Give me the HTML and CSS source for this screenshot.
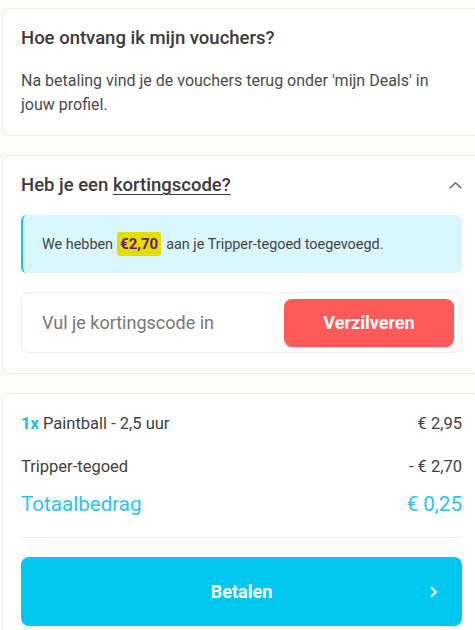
FILE: index.html
```html
<!DOCTYPE html>
<html>
<head>
    <link rel="stylesheet" href="styles.css">
</head>
<body>

    <div class="card">
        <h2 class="card-title">Hoe ontvang ik mijn vouchers?</h2>
        <p class="card-text">Na betaling vind je de vouchers terug onder 'mijn Deals' in jouw profiel.</p>
    </div>

    <div class="card card-code">
        <div class="card-head">
            <h2 class="card-title">Heb je een <span class="underline">kortingscode?</span></h2>
            <svg class="chevron" width="13" height="7" viewBox="0 0 13 7">
                <path d="M0.8 6.3 L6.5 0.9 L12.2 6.3" fill="none" stroke="#555" stroke-width="1.2"/>
            </svg>
        </div>

        <div class="notice">
            We hebben <span class="amount">€2,70</span> aan je Tripper-tegoed toegevoegd.
        </div>

        <form class="code-form">
            <input type="text" class="code-input" placeholder="Vul je kortingscode in">
            <button type="button" class="code-button">Verzilveren</button>
        </form>
    </div>

    <div class="card">
        <div class="line">
            <span><span class="qty">1x</span> Paintball - 2,5 uur</span>
            <span>€ 2,95</span>
        </div>
        <div class="line">
            <span>Tripper-tegoed</span>
            <span>- € 2,70</span>
        </div>
        <div class="line total">
            <span>Totaalbedrag</span>
            <span>€ 0,25</span>
        </div>

        <hr class="divider">

        <button type="button" class="pay-button">
            Betalen
            <svg class="pay-arrow" width="9" height="14" viewBox="0 0 9 14">
                <path d="M2 2 L7 7 L2 12" fill="none" stroke="#fff" stroke-width="2"/>
            </svg>
        </button>
    </div>

</body>
</html>
```

FILE: styles.css
```css
html,
body {
    height: 100%;
}

body {
    font-family: Roboto, "Liberation Sans", sans-serif;
    background-color: #fbfbf8;
    margin: 0;
    padding: 8px 0 0 2px;
    box-sizing: border-box;
    overflow: hidden;
    color: #333;
}

.card {
    background-color: #fff;
    border: 1px solid #ededea;
    border-radius: 8px;
    width: 441px;
    padding: 17px 18px 18px 18px;
    margin-bottom: 19px;
}

.card-code {
    padding-bottom: 20px;
}

.card-title {
    font-size: 18.5px;
    font-weight: 500;
    line-height: 24px;
    margin: 0;
    color: #3a3a3a;
}

.card-text {
    font-size: 16px;
    line-height: 24px;
    margin: 19px 0 0 0;
    color: #4a4a4a;
}

.card-head {
    display: flex;
    justify-content: space-between;
    align-items: center;
}

.underline {
    text-decoration: underline;
    text-underline-offset: 3px;
    text-decoration-thickness: 1px;
}

.notice {
    margin-top: 18px;
    background-color: #d8f6fb;
    border-left: 2px solid #12c4ec;
    border-radius: 6px;
    padding: 0 0 0 19px;
    height: 58px;
    display: flex;
    align-items: center;
    font-size: 14.4px;
    color: #444;
}

.amount {
    background-color: #e2df00;
    color: #6a1b6c;
    font-weight: 700;
    font-size: 15px;
    border-radius: 3px;
    padding: 3px 3px;
    margin: 0 5px 0 4px;
}

.code-form {
    margin-top: 19px;
    border: 1px solid #ededea;
    border-radius: 8px;
    height: 59px;
    display: flex;
    align-items: center;
    justify-content: space-between;
    padding: 0 7px 0 20px;
}

.code-input {
    border: none;
    outline: none;
    background: transparent;
    font-family: inherit;
    font-size: 18px;
    color: #333;
    width: 240px;
    padding: 0;
}

.code-input::placeholder {
    color: #777;
}

.code-button {
    background-color: #ff5a5a;
    color: #fff;
    border: none;
    border-radius: 8px;
    width: 170px;
    height: 48px;
    font-family: inherit;
    font-size: 18px;
    font-weight: 700;
    cursor: pointer;
}

.line {
    display: flex;
    justify-content: space-between;
    font-size: 16.5px;
    line-height: 26px;
    color: #3f3f3f;
    margin-bottom: 17px;
}

.qty {
    color: #15bde3;
    font-weight: 700;
}

.line.total {
    font-size: 20.6px;
    line-height: 30px;
    color: #2cc4e8;
    margin-top: -8px;
    margin-bottom: 0;
}

.divider {
    border: none;
    border-top: 1px solid #ececea;
    margin: 18px 0 19px 0;
}

.pay-button {
    position: relative;
    display: block;
    width: 100%;
    height: 69px;
    background-color: #00c8f0;
    color: #fff;
    border: none;
    border-radius: 8px;
    font-family: inherit;
    font-size: 18px;
    font-weight: 700;
    cursor: pointer;
}

.pay-arrow {
    position: absolute;
    right: 24px;
    top: 28px;
}
```
